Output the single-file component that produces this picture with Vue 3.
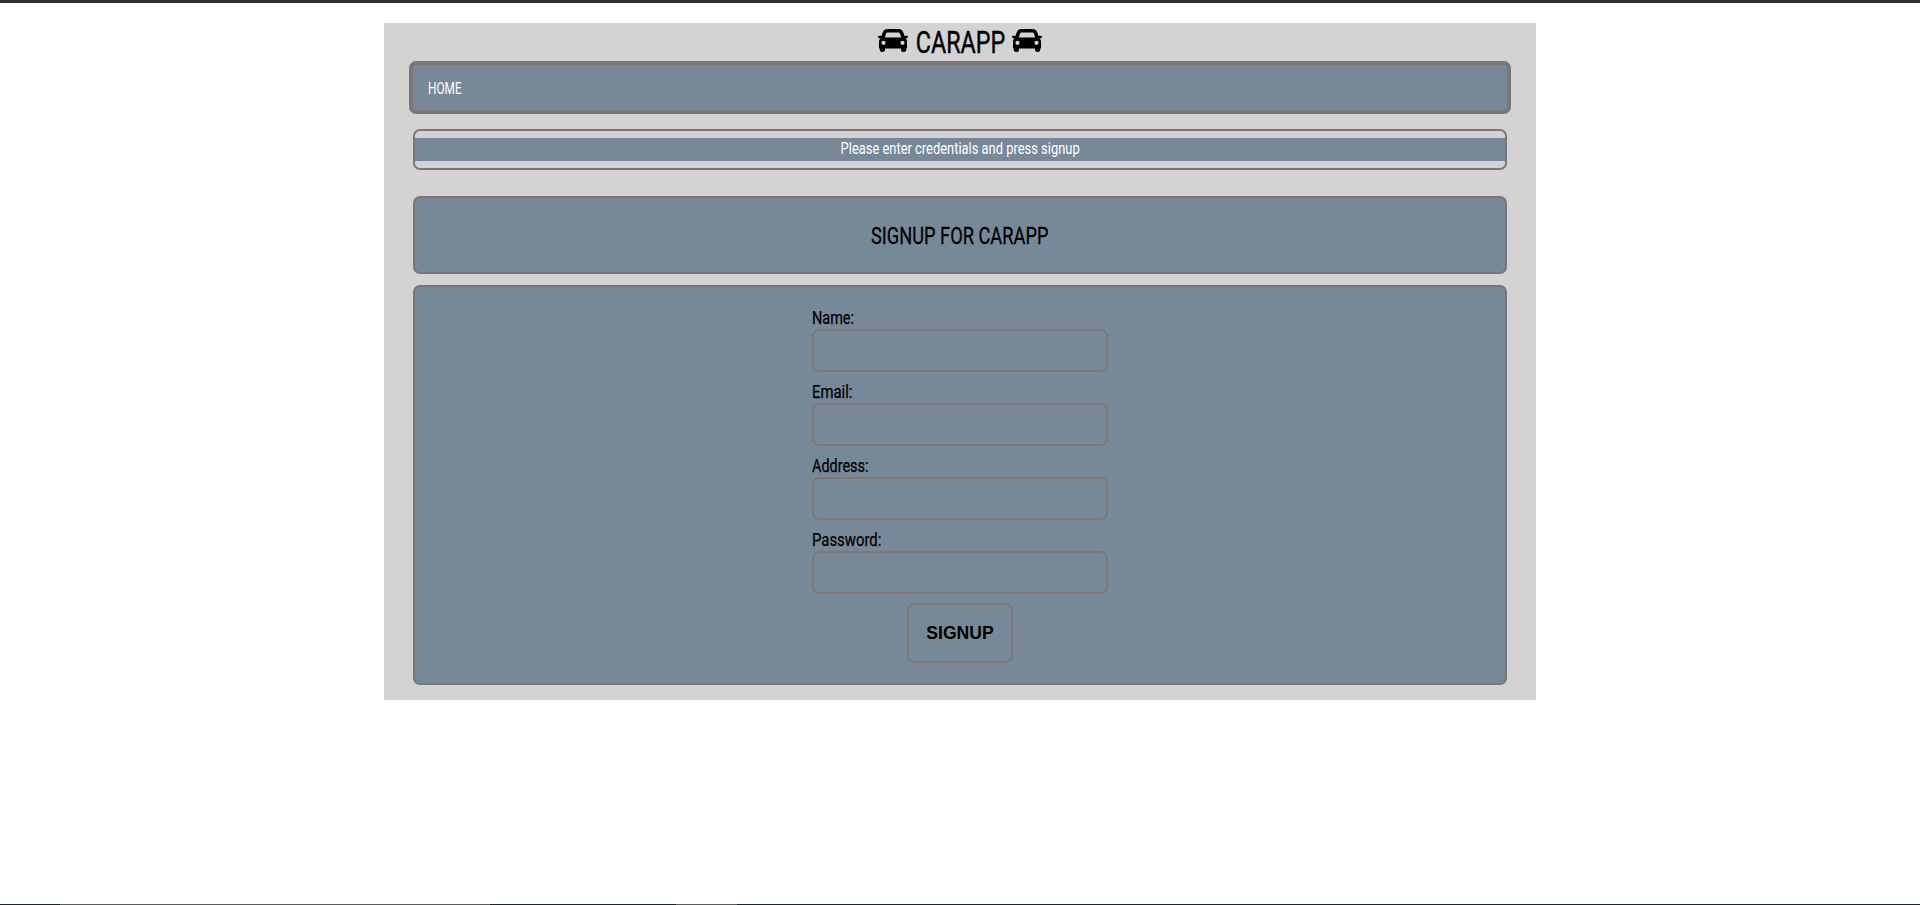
<script setup>
import { ref } from 'vue'

const fields = [
  { id: 'name', label: 'Name:', type: 'text' },
  { id: 'email', label: 'Email:', type: 'email' },
  { id: 'address', label: 'Address:', type: 'text' },
  { id: 'password', label: 'Password:', type: 'password' },
]
const values = ref({ name: '', email: '', address: '', password: '' })
const carPath =
  'M10 0H20C23.2 0 24.8 1.5 25.6 4.2L26.4 6.8H28.8C30.4 6.8 30.4 9.2 28.8 9.2H27.5C28.5 10.2 29 11.4 29 12.8V19.5H28.2V21C28.2 23.7 23 23.7 23 21V19.5H7V21C7 23.7 1.8 23.7 1.8 21V19.5H1V12.8C1 11.4 1.5 10.2 2.5 9.2H1.2C-.4 9.2-.4 6.8 1.2 6.8H3.6L4.4 4.2C5.2 1.5 6.8 0 10 0ZM10 3.6C8.7 3.6 8.1 4.1 7.8 5.2L6.8 8.6H23.2L22.2 5.2C21.9 4.1 21.3 3.6 20 3.6ZM5.5 11.7A2.1 2.1 0 1 0 5.5 15.9A2.1 2.1 0 1 0 5.5 11.7ZM24.5 11.7A2.1 2.1 0 1 0 24.5 15.9A2.1 2.1 0 1 0 24.5 11.7Z'
</script>

<template>
  <div class="page">
    <main class="container">
      <h1 class="brand">
        <svg class="car" viewBox="0 0 30 23"><path :d="carPath" fill-rule="evenodd" /></svg>
        <span class="brand-box"><span class="brand-text">CARAPP</span></span>
        <svg class="car" viewBox="0 0 30 23"><path :d="carPath" fill-rule="evenodd" /></svg>
      </h1>
      <nav class="nav"><a class="home">HOME</a></nav>
      <div class="message"><p class="band"><span class="band-text">Please enter credentials and press signup</span></p></div>
      <header class="title"><h2 class="title-text">SIGNUP FOR CARAPP</h2></header>
      <form class="form" @submit.prevent>
        <div v-for="f in fields" :key="f.id" class="field">
          <label class="label" :class="f.id" :for="f.id">{{ f.label }}</label>
          <input :id="f.id" v-model="values[f.id]" class="input" :type="f.type" />
        </div>
        <button class="submit" type="submit">SIGNUP</button>
      </form>
    </main>
    <footer class="edge"></footer>
  </div>
</template>

<style>
body { margin: 0; background: #fff; overflow: hidden; }
</style>

<style scoped>
.page {
  box-sizing: border-box;
  height: 905px;
  display: flex;
  flex-direction: column;
  align-items: center;
  border-top: 3px solid #2d2f31;
  padding-top: 20px;
  font-family: Roboto, "Liberation Sans", sans-serif;
  color: #000;
}
.container {
  box-sizing: border-box;
  width: 1152px;
  height: 677px;
  padding: 0 29px;
  background: lightgray;
  display: flex;
  flex-direction: column;
}
.brand {
  margin: 0;
  height: 38px;
  display: flex;
  justify-content: center;
  align-items: center;
  font-size: 30.5px;
  font-weight: 400;
  line-height: 36px;
}
.car { width: 30px; height: 23px; margin-bottom: 3px; }
.brand-box { width: 104px; display: flex; justify-content: center; padding-top: 1px; }
.brand-text { transform: scaleX(.765); -webkit-text-stroke: .4px #000; }
.nav {
  box-sizing: border-box;
  height: 53px;
  margin: 0 -4px;
  border: 4px solid #7a7877;
  border-radius: 7px;
  background: #778899;
  padding: 1px 15px 0;
  display: flex;
  align-items: center;
}
.home { color: #fff; font-size: 16px; transform: scaleX(.74); transform-origin: left; }
.message {
  box-sizing: border-box;
  height: 41px;
  margin-top: 15px;
  border: 2px solid #7a7877;
  border-radius: 7px;
  padding-top: 7px;
}
.band {
  margin: 0;
  height: 23px;
  background: #778899;
  color: #fff;
  font-size: 16px;
  line-height: 21px;
  text-align: center;
}
.band-text { display: inline-block; transform: scaleX(.807); }
.title {
  box-sizing: border-box;
  height: 78px;
  margin-top: 26px;
  border: 2px solid #7a7877;
  border-radius: 7px;
  background: #778899;
  display: flex;
  align-items: center;
  justify-content: center;
  padding-top: 2px;
}
.title-text { margin: 0; font-size: 24px; font-weight: 400; line-height: 28px; transform: scaleX(.76); -webkit-text-stroke: .3px #000; }
.form {
  box-sizing: border-box;
  height: 400px;
  margin-top: 11px;
  padding-top: 20px;
  border: 2px solid #7a7877;
  border-radius: 7px;
  background: #778899;
  display: flex;
  flex-direction: column;
  align-items: center;
}
.field { width: 296px; height: 74px; display: flex; flex-direction: column; align-items: flex-start; }
.label { height: 22px; line-height: 23px; font-size: 17.5px; transform: scaleX(.825); transform-origin: left; -webkit-text-stroke: .25px #000; }
.label.email { transform: scaleX(.85); }
.label.password { transform: scaleX(.85); }
.input {
  box-sizing: border-box;
  width: 296px;
  height: 43px;
  border: 2px solid #7d7776;
  border-radius: 7px;
  background: transparent;
  padding: 0 10px;
  font: 16px "Liberation Sans", sans-serif;
  outline: none;
}
.submit {
  box-sizing: border-box;
  width: 106px;
  height: 60px;
  border: 2px solid #7d7776;
  border-radius: 7px;
  background: transparent;
  padding: 0;
  color: #000;
  font: bold 17.6px "Liberation Sans", sans-serif;
}
.edge {
  margin-top: auto;
  width: 100%;
  height: 1px;
  background: linear-gradient(to right, #1d2529 60px, #5c5b5b 60px 490px, #1d2529 490px 676px, #5c5b5b 676px 737px, #1d2529 737px);
}
</style>
